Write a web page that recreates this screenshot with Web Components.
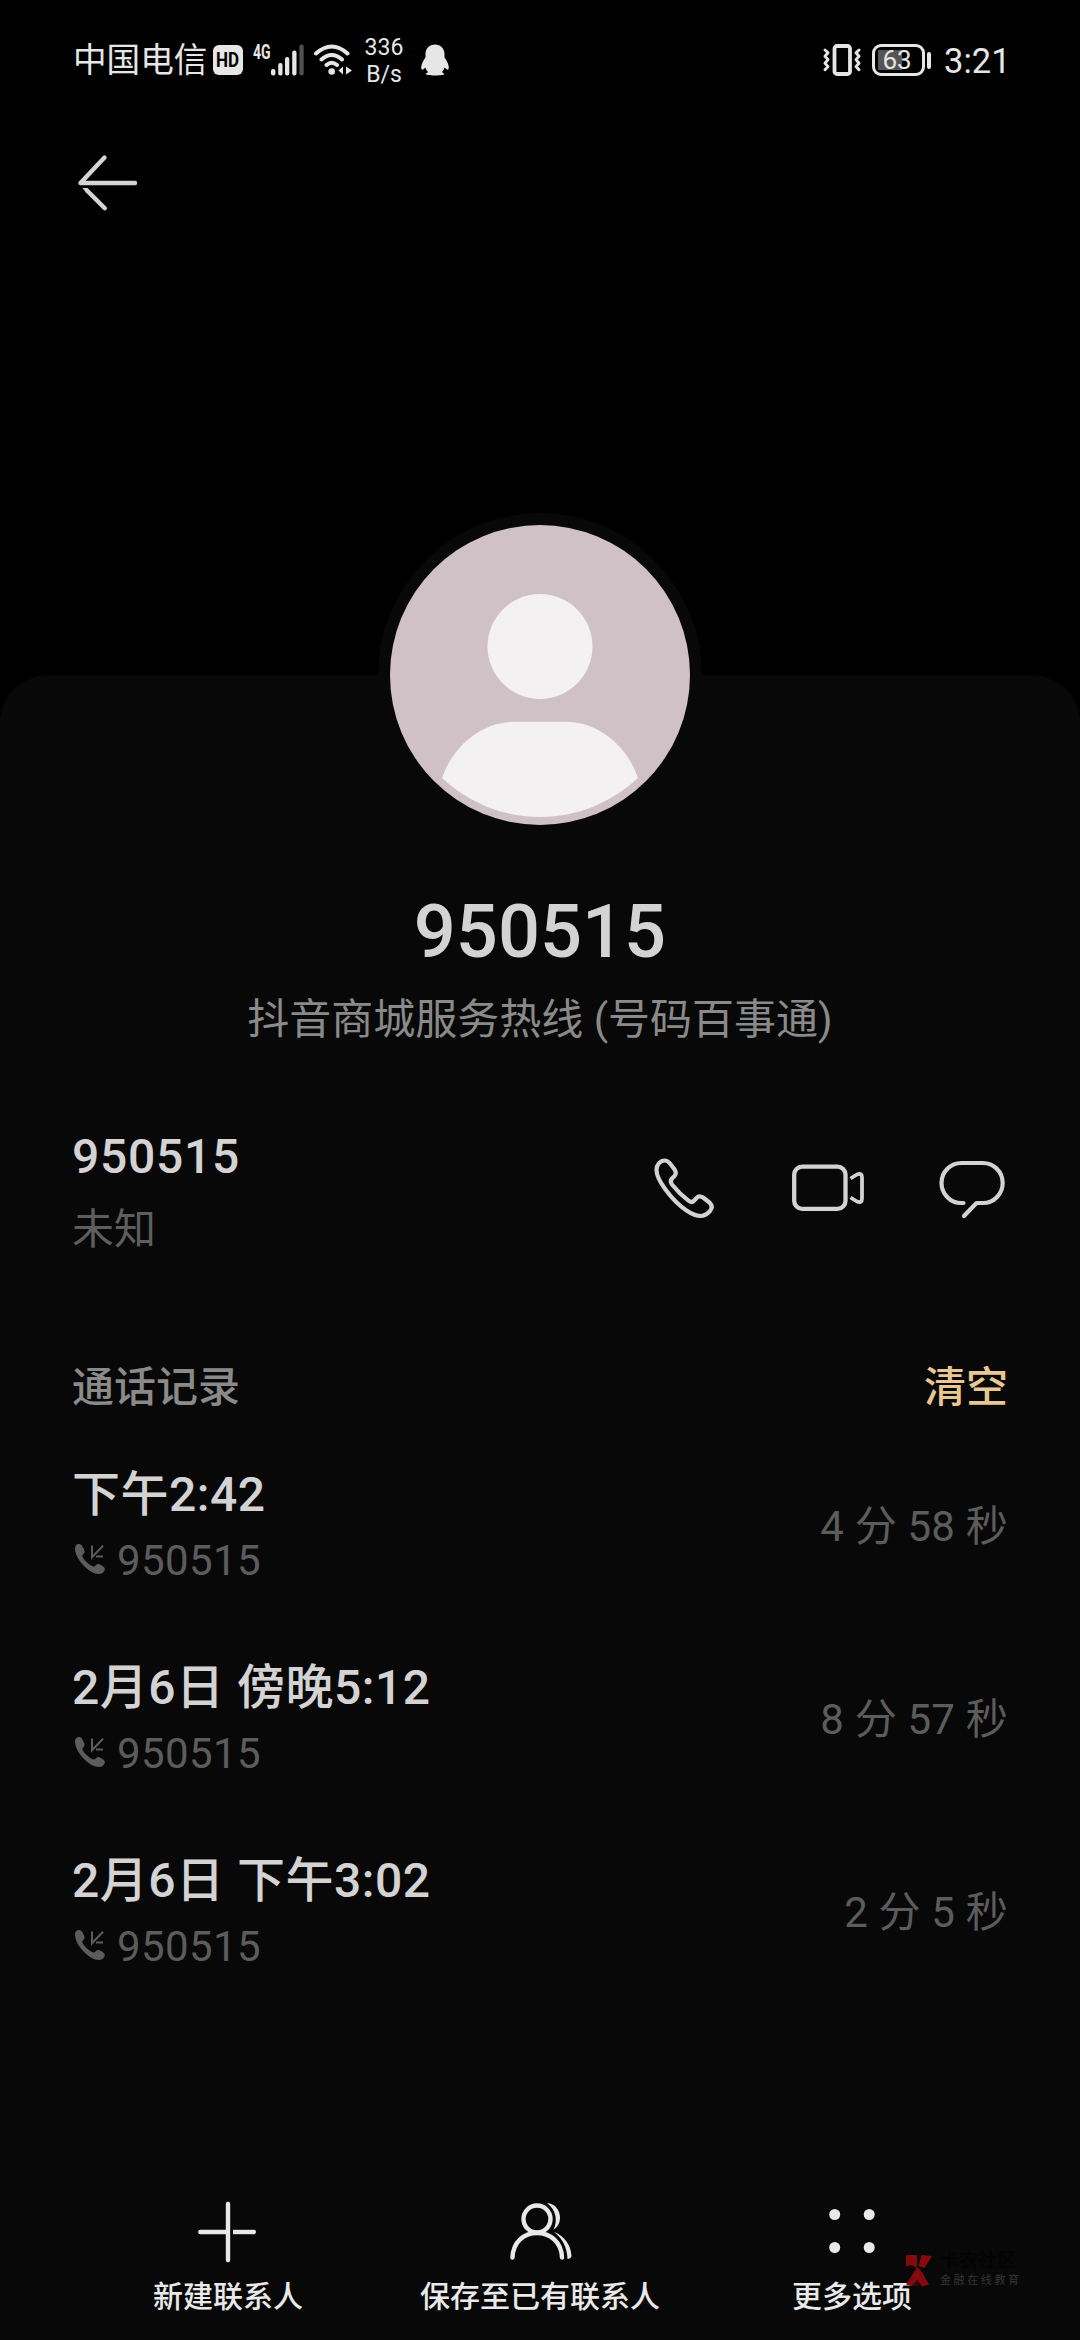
<!DOCTYPE html>
<html lang="zh-CN">
<head>
<meta charset="utf-8">
<title>950515</title>
<style>
html,body{margin:0;background:#000}
body{font-family:Roboto,"Noto Sans CJK SC",sans-serif;color:#d3d3d3;width:1080px;height:2340px;overflow:hidden}
</style>
</head>
<body>
<contact-page></contact-page>
<script>
function define(name, html) {
  const t = document.createElement('template');
  t.innerHTML = html;
  customElements.define(name, class extends HTMLElement {
    constructor() {
      super();
      this.attachShadow({ mode: 'open' }).appendChild(t.content.cloneNode(true));
    }
  });
}

define('status-bar', `
<style>
:host{display:flex;justify-content:space-between;align-items:center;height:120px;padding:0 72px 0 73px;box-sizing:border-box;color:#e6e6e6}
.g{display:flex;align-items:center}
svg{display:block;flex:none}
.carrier{font-size:33.600px;line-height:50px;width:140px;padding-top:2px;white-space:nowrap}
.net{font-size:23px;line-height:27px;text-align:center;width:46px;margin:0 14px 0 9px;padding-top:2px}
.bat{display:flex;align-items:center;margin-left:11px}
.cell{box-sizing:border-box;width:53px;height:32px;border:3px solid #e6e6e6;border-radius:9px;background:linear-gradient(#555,#555) 3px 3px/24px 20px no-repeat;font-size:26px;line-height:27px;text-align:center;padding-right:2px}
.tip{width:4px;height:17px;border-radius:2px;background:#e6e6e6;margin-left:2.5px}
.time{font-size:34.5px;line-height:50px;margin:2px 0 0 13px;width:64px;white-space:nowrap}
.hd{box-sizing:border-box;width:30px;height:30px;border-radius:6px;background:#e6e6e6;color:#000;font-weight:700;font-size:20px;line-height:31px;display:flex;justify-content:center;}
.hd span{display:block;transform:scaleX(.85)}
.sig{display:flex;align-items:flex-start;margin:0 10px 0 10px;height:32px}
.sig span{font-size:20px;line-height:16px;font-weight:700;width:18px;transform:scaleX(.7);transform-origin:0 0;height:18px}
</style>
<div class="g">
  <div class="carrier">中国电信</div>
  <div class="hd"><span>HD</span></div>
  <div class="sig"><span>4G</span>
    <svg width="33" height="32" viewBox="0 0 33 32" fill="#e6e6e6"><rect y="25" width="4.4" height="6.5" rx="2"/><rect x="7.2" y="19" width="4.3" height="12.5" rx="2"/><rect x="14" y="13" width="4.3" height="18.5" rx="2"/><rect x="21.2" y="6.500" width="4.3" height="25" rx="2"/><rect x="28.400" y="0.500" width="4.3" height="31" rx="2" fill="#505050"/></svg>
  </div>
  <svg width="38" height="32" viewBox="0 0 38 32" fill="none" stroke="#e6e6e6" stroke-width="4" stroke-linecap="round"><path d="M2 9.500Q17.700-4.500 33.500 9.500M7.500 15.500Q17.700 6.500 28 15.500M12.500 21Q17.700 16.500 23 21"/><circle cx="17.700" cy="27.500" r="3.300" fill="#e6e6e6" stroke="none"/><path d="M24.500 26.500l4.500-4v8zM38 26.500l-6-4v8z" fill="#e6e6e6" stroke="none"/></svg>
  <div class="net">336<br>B/s</div>
  <svg width="28" height="32" viewBox="0 0 28 32" fill="#e6e6e6"><path d="M14 .5C8.500.500 4.500 4.500 4.500 10v3.500C2 17 .2 20.500.2 23.500c0 2 1 3 2.500 1.500l1.800-1.500c.5 2 1.500 3.700 2.800 4.700-1.300.3-2.300 1-2.300 1.800 0 1 3 1.400 9 1.400s9-.4 9-1.400c0-.8-1-1.500-2.300-1.800 1.300-1 2.300-2.700 2.800-4.700l1.800 1.500c1.500 1.500 2.500.5 2.500-1.500 0-3-1.800-6.500-4.300-10V10C23.500 4.500 19.500.500 14 .5z"/></svg>
</div>
<div class="g">
  <svg width="38" height="32" viewBox="0 0 38 32" fill="none" stroke="#e6e6e6" stroke-width="3" stroke-linecap="round" stroke-linejoin="round"><rect x="11.500" y="2" width="15.500" height="28" rx="2.500" stroke-width="3.800"/><path stroke-width="2.900" d="M2 6l3 2.800-3 3.400 3 3.400-3 3.600 3 3.400-3 3.200M36 6l-3 2.800 3 3.400-3 3.400 3 3.600-3 3.400 3 3.200"/></svg>
  <div class="bat"><div class="cell">63</div><div class="tip"></div></div>
  <div class="time">3:21</div>
</div>`);

define('back-button', `
<style>:host{display:block;padding:27px 0 0 72px;height:72px}svg{display:block}</style>
<svg width="72" height="72" viewBox="0 0 72 72" fill="none" stroke="#d5d5d5" stroke-width="4.400" stroke-linecap="round" stroke-linejoin="round"><path d="M63 36H8.500L32.500 10.500M32.800 61.200L15.500 44"/><path d="M10.500 41H15.500L17 42.500L14 45.500Z" stroke="none" fill="#d5d5d5"/></svg>`);

define('contact-avatar', `
<style>:host{display:block;width:300px;height:300px;border:12px solid #080808;border-radius:50%;background:#080808}svg{display:block}</style>
<svg width="300" height="300" viewBox="390 525 300 300"><circle cx="540" cy="675" r="150" fill="#cfc1c6"/><g fill="#f3f1f2"><circle cx="540" cy="646.500" r="52.500"/><path d="M442 778C453 746 481 721.700 515 721.700H565C599 721.700 627 746 638 778A142.600 142.600 0 0 1 442 778Z"/></g></svg>`);

define('number-row', `
<style>
:host{display:flex;justify-content:space-between;align-items:center;height:126px}
.n{font-size:48px;font-weight:500;line-height:56px;letter-spacing:.7px;padding-top:1px}
.k{font-size:42px;line-height:50px;margin-top:20px;color:#5e5e5e}
.a{display:flex;gap:72px}
svg{display:block}
</style>
<div><div class="n"><slot name="number"></slot></div><div class="k"><slot name="kind"></slot></div></div>
<div class="a">
<svg width="72" height="72" viewBox="0 0 72 72" fill="none" stroke="#d3d3d3" stroke-width="4.200" stroke-linejoin="round"><path d="M16.500 5.500C12.500 5.500 8.500 9.500 8.500 15C8.500 22.500 13.500 29 17.500 34.500C23 42 31 50.500 38.500 55.500C43 58.500 48 61 52.500 61C56.500 61 59.500 58.800 62 56C64.500 53 64 50 61.500 47.500L55 42.500C52.500 40.800 50 41.300 48.500 43L46 45.700C44.500 47.300 42.500 47.300 40.500 45.700C35 41.500 28 34.500 24 29.500C22.300 27.300 22.300 25.300 24 23.500L26.500 21C28.300 19 28.200 17 26.800 14.800L22 8.500C20.500 6.500 18.500 5.500 16.500 5.500Z"/></svg>
<svg width="72" height="72" viewBox="0 0 72 72" fill="none" stroke="#d3d3d3" stroke-width="4.300"><rect x="2.200" y="11.600" width="51.300" height="42.300" rx="8"/><path stroke-width="3.800" stroke-linejoin="round" d="M58.500 23.500L65 19.500Q70 17.500 70 22.500V43.500Q70 48.500 65 46.500L58.500 42.500"/></svg>
<svg width="72" height="72" viewBox="0 0 72 72" fill="none" stroke="#d3d3d3" stroke-width="4.200" stroke-linecap="round" stroke-linejoin="round"><path d="M27.500 48H25.500A20 20 0 0 1 25.500 8H46.700A20 20 0 0 1 46.700 48H40.500L28 61"/></svg>
</div>`);

define('section-head', `
<style>:host{display:flex;justify-content:space-between;height:60px;font-size:42px;line-height:60px;font-weight:500;color:#8a8a8a}.c{color:#e8c792}</style>
<slot></slot><div class="c"><slot name="action"></slot></div>`);

define('call-entry', `
<style>
:host{display:flex;justify-content:space-between;align-items:center;height:193px}
.t{font-size:48px;font-weight:500;line-height:60px;white-space:nowrap;letter-spacing:.5px;padding-top:1px}
.s{display:flex;align-items:center;gap:12px;padding-left:3px;margin-top:8px;color:#5c5c5c;font-size:42px;line-height:56px;letter-spacing:.4px}
.d{color:#5c5c5c;font-size:42px;line-height:56px;white-space:nowrap;letter-spacing:.2px}
svg{display:block;margin-bottom:4px}
</style>
<div><div class="t"><slot></slot></div>
<div class="s"><svg width="30" height="30" viewBox="0 0 30 30"><path fill="#5c5c5c" d="M3.800 0C1.500 0 0 2 0 4.500C0 11 4.500 17.500 9.500 22.500C14 27 19 30 24 30C27 30 29.800 27.500 29.800 25.200C29.800 24 29 23 27.500 22L24.500 20.300C22.500 19.500 21.500 20.500 20 22C19 22.900 18 22.700 16.500 21.800C13 19.800 9.500 16.500 7.800 13.500C7 12 7.200 11.300 8.200 10.300C9.800 8.800 10 7.500 9 5.500L7.200 2C6.300.500 5.200 0 3.800 0Z"/><path fill="none" stroke="#5c5c5c" stroke-width="2" d="M17 1.500V13.200L28 1.800M21 12.500H28"/></svg><slot name="number"></slot></div></div>
<div class="d"><slot name="duration"></slot></div>`);

define('action-item', `
<style>
:host{display:flex;flex-direction:column;align-items:center;width:312px;color:#e9e9e9}
.l{font-size:30px;font-weight:500;line-height:40px;margin-top:9px;white-space:nowrap}
::slotted(svg){display:block}
</style>
<slot name="icon"></slot><div class="l"><slot></slot></div>`);

define('water-mark', `
<style>
:host{position:absolute;left:905px;top:2250px;display:flex;align-items:flex-start;gap:8px}
svg{display:block}
.b{font-size:19px;line-height:22px;font-weight:700;color:#040404;height:24px}
.s{font-size:11px;line-height:14px;letter-spacing:2.600px;color:#353535;white-space:nowrap}
</style>
<svg width="27" height="38" viewBox="0 0 27 38" fill="#850a10"><path d="M1 5h11v13L6.500 15 1 16.500zM16.500 5L27 6l-7.500 12-6-2zM12.500 17l4.500 5 7 12.500-7 2-5-7-5 6.500-6-1.500z"/><path d="M1 31h13v5H3z" opacity=".35"/></svg>
<div><div class="b">卡农社区</div><div class="s">金融在线教育</div></div>`);

define('contact-page', `
<style>
:host{display:flex;flex-direction:column;width:1080px;height:2340px;position:relative;background:#000}
.top{height:675px;flex:none}
.panel{flex:1;display:flex;flex-direction:column;background:#080808;border-radius:48px 48px 0 0;padding:0 72px 23px}
contact-avatar{margin:-162px auto 0;flex:none}
.name{font-size:74px;font-weight:500;line-height:84px;text-align:center;margin-top:53px}
.sub{font-size:42px;line-height:56px;text-align:center;margin-top:18px;color:#8a8a8a}
number-row{margin-top:80px}
section-head{margin:104px 0 12px}
.bar{display:flex;margin-top:auto}
</style>
<div class="top"><status-bar></status-bar><back-button></back-button></div>
<div class="panel">
<contact-avatar></contact-avatar>
<div class="name">950515</div>
<div class="sub">抖音商城服务热线 (号码百事通)</div>
<number-row><span slot="number">950515</span><span slot="kind">未知</span></number-row>
<section-head><span>通话记录</span><span slot="action">清空</span></section-head>
<call-entry>下午2:42<span slot="number">950515</span><span slot="duration">4 分 58 秒</span></call-entry>
<call-entry>2月6日 傍晚5:12<span slot="number">950515</span><span slot="duration">8 分 57 秒</span></call-entry>
<call-entry>2月6日 下午3:02<span slot="number">950515</span><span slot="duration">2 分 5 秒</span></call-entry>
<div class="bar">
<action-item><svg slot="icon" width="72" height="72" viewBox="0 0 72 72" fill="none" stroke="#e9e9e9" stroke-width="4.400" stroke-linecap="round"><path d="M36 8V64M8.300 36H34"/><path d="M41 36H61.500" stroke-linecap="butt"/><path d="M61.500 36h.3"/></svg>新建联系人</action-item>
<action-item><svg slot="icon" width="72" height="72" viewBox="0 0 72 72" fill="none" stroke="#e9e9e9" stroke-width="4.400" stroke-linecap="round"><circle cx="33" cy="23" r="13.500"/><path d="M8.500 61.500C9 46 20 37 33 37S57.500 46 58 61.500"/><path stroke="none" fill="#e9e9e9" d="M43 7C51 7.500 56 14 56 21.500C56 27 53.500 31.500 49.500 33.500C54 25 52 13.500 43 7ZM50 36C60 39.500 67 49 67.500 60Q67 62.500 63.500 63C63 51 58.500 42.500 50 36Z"/></svg>保存至已有联系人</action-item>
<action-item><svg slot="icon" width="72" height="72" viewBox="0 0 72 72" fill="#e9e9e9"><circle cx="18.700" cy="18.500" r="5.500"/><circle cx="53.200" cy="18.500" r="5.500"/><circle cx="18.700" cy="51.500" r="5.500"/><circle cx="53.200" cy="51.500" r="5.500"/></svg>更多选项</action-item>
</div>
</div>
<water-mark></water-mark>`);
</script>
</body>
</html>
